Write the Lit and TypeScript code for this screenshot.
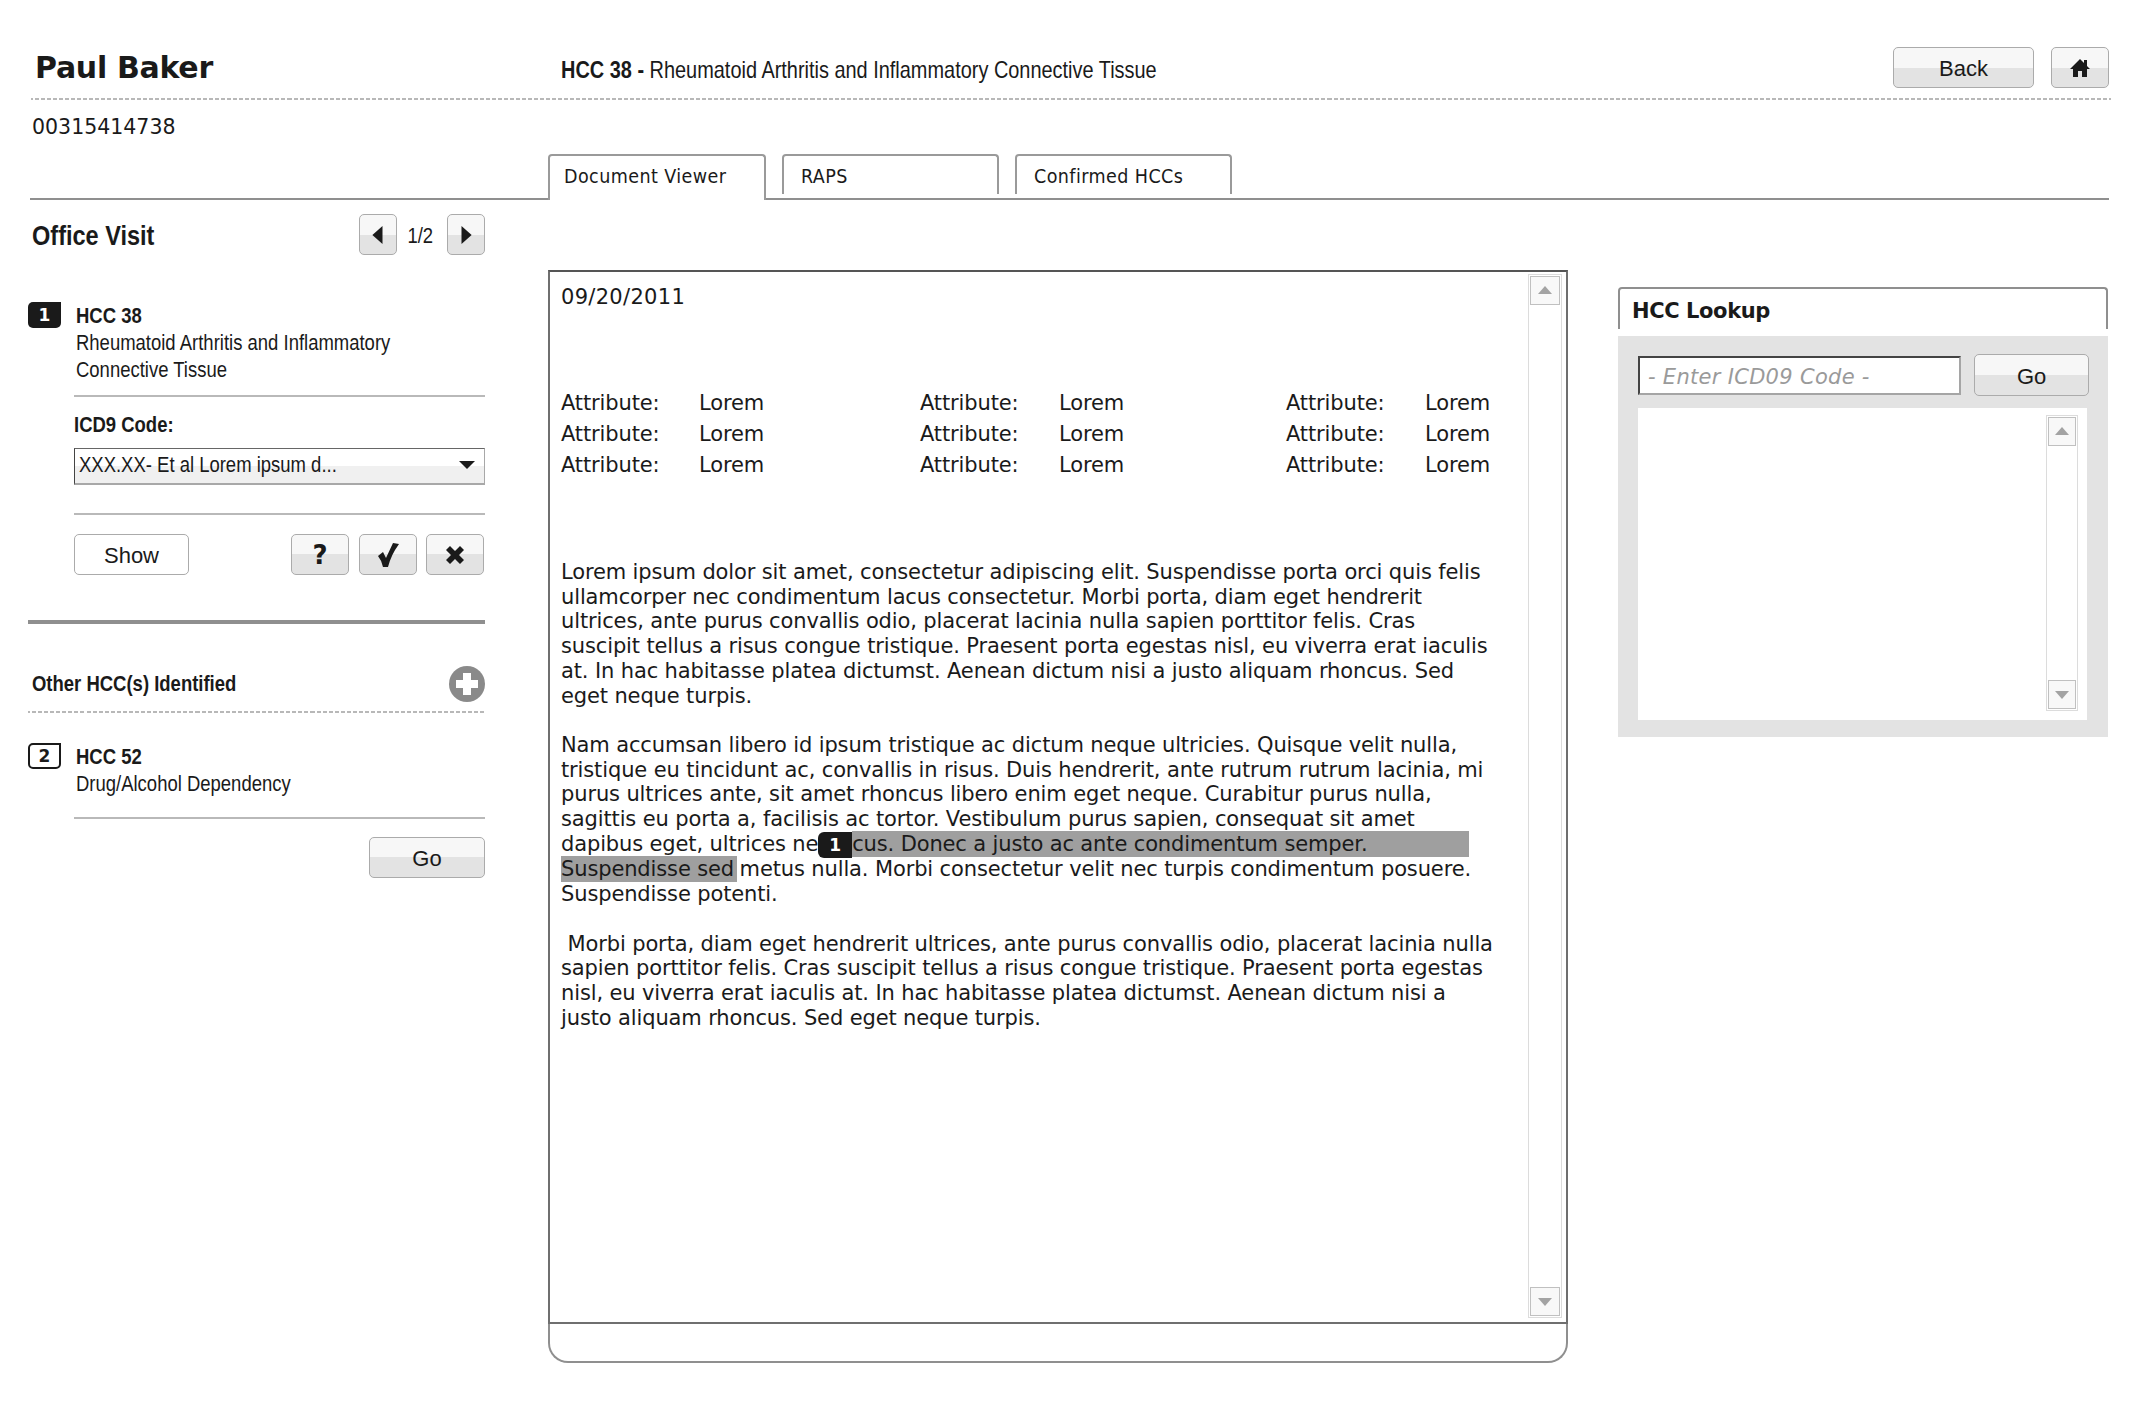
import { LitElement, html, css } from "lit";
import { customElement } from "lit/decorators.js";

const tri = (d: string, fill = "#1a1a1a", size = 16) => html`<svg class="tri" viewBox="0 0 16 16" width="${size}" height="${size}"><path d="${d}" fill="${fill}"></path></svg>`;
const UP = "M8 3 L15 11 L1 11 Z";
const DOWN = "M1 4 L15 4 L8 12 Z";
const LEFT = "M12 0 L12 16 L3 8 Z";
const RIGHT = "M4 0 L4 16 L13 8 Z";

const scrollbar = html`<div class="sb">
  <div class="sb-btn">${tri(UP, "#a3a3a3")}</div>
  <div class="sb-btn">${tri(DOWN, "#a3a3a3")}</div>
</div>`;

const attrRow = html`
  <span>Attribute:</span><span>Lorem</span>
  <span>Attribute:</span><span>Lorem</span>
  <span>Attribute:</span><span>Lorem</span>`;

@customElement("app-root")
export class AppRoot extends LitElement {
  static styles = css`
    :host { display: block; width: 2134px; height: 1418px; background: #fff; color: #1a1a1a; font-family: "DejaVu Sans", sans-serif; overflow: hidden; }
    * { box-sizing: border-box; }
    .sq { display: inline-block; transform: scaleX(0.84); transform-origin: 0 50%; white-space: nowrap; }
    .btn { display: flex; align-items: center; justify-content: center; border: 1px solid #ababab; border-radius: 5px; background: linear-gradient(#f7f7f7 0 50%, #e3e3e3 50% 100%); color: #1a1a1a; font-family: "Liberation Sans", Arial, sans-serif; font-size: 22px; padding: 3px 0 0; }
    .btn.plain { background: #fff; padding-top: 2px; }

    .head { height: 100px; margin: 0 23px 0 31px; border-bottom: 2px dashed #c4c4c4; display: flex; align-items: flex-end; border-image: repeating-linear-gradient(90deg, #b8b8b8 0 4px, transparent 4px 6px) 2; }
    .name { width: 530px; padding: 0 0 12px 4px; font-size: 30px; font-weight: 700; line-height: 36px; letter-spacing: -0.3px; }
    .title { flex: 1; padding-bottom: 13px; font-size: 24px; line-height: 30px; white-space: nowrap; font-family: "Liberation Sans", Arial, sans-serif; }
    .title .sq { transform: scaleX(0.83); }
    .title b { font-weight: 700; }
    .head .btn { height: 41px; margin-bottom: 10px; }
    .back { width: 141px; margin-right: 17px; }
    .home { width: 58px; margin-right: 2px; padding: 0; }

    .idrow { height: 54px; margin-left: 32px; font-size: 20.5px; line-height: 54px; }
    .tabs { height: 46px; margin: 0 25px 0 30px; border-bottom: 2px solid #8f8f8f; padding-left: 518px; display: flex; gap: 16px; align-items: flex-start; }
    .tab { flex: none; width: 217px; height: 40px; border: 2px solid #9a9a9a; border-bottom: 0; border-radius: 4px 4px 0 0; font-size: 19.5px; letter-spacing: 0.42px; line-height: 41px; padding-left: 17px; white-space: nowrap; font-stretch: condensed; }
    .tab.on { width: 218px; height: 46px; background: #fff; padding-left: 14px; }

    .main { display: flex; align-items: flex-start; margin-left: 28px; }
    .side { width: 457px; margin-right: 63px; font-family: "Liberation Sans", Arial, sans-serif; }
    .vhead { display: flex; align-items: center; height: 41px; margin-top: 14px; padding-left: 4px; }
    .vhead h2 { flex: 1; margin: 0; font-size: 28px; font-weight: 700; padding-top: 2px; }
    .nav { width: 38px; height: 41px; padding: 0; }
    .tri { display: block; }
    .page { width: 50px; text-align: center; font-size: 22px; padding: 3px 4px 0 0; }
    .page .sq { transform-origin: 50% 50%; }

    .item { display: flex; margin-top: 47px; }
    .badge { flex: none; width: 33px; height: 26px; border-radius: 5px 0 5px 5px; background: #1a1a1a; color: #fff; font-family: "DejaVu Sans", sans-serif; font-weight: 700; font-size: 17px; line-height: 26px; text-align: center; }
    .badge.open { background: #fff; color: #1a1a1a; border: 2px solid #1a1a1a; line-height: 22px; }
    .itxt { margin-left: 15px; font-size: 22px; line-height: 27px; white-space: nowrap; }
    .itxt b { font-weight: 700; }
    .in { margin-left: 46px; }
    hr { border: 0; height: 2px; background: #b9b9b9; margin: 0; }
    .label { font-size: 22px; font-weight: 700; line-height: 26px; margin-top: 15px; }
    .select { display: flex; align-items: center; justify-content: space-between; height: 37px; margin-top: 10px; padding: 0 9px 2px 4px; border: 1px solid #a8a8a8; border-bottom-width: 2px; border-top-color: #666; border-left-color: #444; background: linear-gradient(#fff 0 50%, #f0f0f0 50% 100%); font-size: 22px; white-space: nowrap; }
    .select .sq { width: 300px; }
    .actions { display: flex; margin-top: 19px; height: 41px; }
    .show { width: 115px; margin-right: 102px; }
    .act { width: 58px; margin-right: 9.5px; padding: 0; }
    .act:last-child { margin-right: 0; }
    .help { font-family: "DejaVu Sans", sans-serif; font-weight: 700; font-size: 26px; }
    .thick { height: 4px; background: #8f8f8f; margin-top: 45px; }
    .other { display: flex; align-items: flex-end; justify-content: space-between; height: 89px; padding: 0 0 9px 4px; border-bottom: 2px dashed #c4c4c4; border-image: repeating-linear-gradient(90deg, #b8b8b8 0 4px, transparent 4px 6px) 2; }
    .other .sq { font-size: 22px; font-weight: 700; line-height: 36px; }
    .plus { display: block; }
    .item.two { margin-top: 30px; }
    .go-row { display: flex; justify-content: flex-end; margin-top: 18px; }
    .go { width: 116px; height: 41px; }

    .doc { width: 1020px; margin-top: 70px; height: 1093px; border: 2px solid #8f8f8f; border-top: 0; border-radius: 0 0 20px 20px; display: flex; flex-direction: column; }
    .docbody { height: 1054px; flex: none; border-bottom: 2px solid #6f6f6f; border-top: 2px solid #555; margin: 0 -2px; border-left: 2px solid #6f6f6f; border-right: 2px solid #6f6f6f; display: flex; }
    .doctext { flex: 1; padding: 10px 0 0 11px; font-size: 21px; line-height: 24.7px; white-space: nowrap; letter-spacing: -0.13px; }
    .date { height: 106px; line-height: 30px; letter-spacing: 0.3px; }
    .attrs { display: grid; grid-template-columns: 138px 221px 139px 227px 139px auto; grid-auto-rows: 31px; line-height: 31px; margin-bottom: 79px; }
    .para { margin-bottom: 24.7px; }
    .hl { background: #9f9f9f; padding: 1px 0; }
    .hl.first { padding-right: 102px; }
    .hl.second { padding-right: 3px; margin-right: -4px; }
    .mini { background: #1a1a1a; color: #fff; border-radius: 6px 0 0 6px; font-weight: 700; font-size: 17px; letter-spacing: 0; padding: 3px 11px; }

    .sb { flex: none; width: 34px; margin: 2px 4px 4px 0; border: 1px solid #dcdcdc; display: flex; flex-direction: column; justify-content: space-between; }
    .sb-btn { height: 29px; margin: 1px; border: 1px solid #c0c0c0; background: #f8f8f8; display: flex; align-items: center; justify-content: center; }

    .look { width: 490px; margin-left: 50px; margin-top: 87px; }
    .ltab { height: 42px; border: 2px solid #8f8f8f; border-bottom: 0; border-radius: 4px 4px 0 0; font-size: 21px; font-weight: 700; line-height: 44px; padding-left: 12px; letter-spacing: -0.4px; }
    .lpanel { margin-top: 7px; height: 401px; background: #e3e3e3; padding: 18px 19px 17px 20px; }
    .lrow { display: flex; gap: 13px; align-items: center; height: 42px; }
    .linput { width: 324px; height: 39px; border: 2px solid #a5a5a5; border-top-color: #444; border-left-color: #444; background: #fff; font-style: italic; color: #9a9a9a; font-size: 21px; letter-spacing: 0.3px; line-height: 38px; padding-left: 8px; white-space: nowrap; }
    .lgo { width: 115px; height: 42px; }
    .lbox { margin-top: 12px; width: 449px; height: 312px; background: #fff; display: flex; justify-content: flex-end; }
    .lbox .sb { margin: 7px 9px 9px 0; width: 32px; }
  `;

  render() {
    return html`
      <div class="head">
        <div class="name">Paul Baker</div>
        <div class="title"><span class="sq"><b>HCC 38 -</b> Rheumatoid Arthritis and Inflammatory Connective Tissue</span></div>
        <button class="btn back">Back</button>
        <button class="btn home" aria-label="Home"><svg width="22" height="22" viewBox="0 0 22 22"><path d="M11 2 L15 6 V3 H18 V9 L21 12 H18 V20 H13 V14 H9 V20 H4 V12 H1 Z" fill="#1a1a1a"></path></svg></button>
      </div>
      <div class="idrow">00315414738</div>
      <div class="tabs">
        <div class="tab on">Document Viewer</div>
        <div class="tab">RAPS</div>
        <div class="tab">Confirmed HCCs</div>
      </div>
      <div class="main">
        <div class="side">
          <div class="vhead">
            <h2><span class="sq">Office Visit</span></h2>
            <button class="btn nav" aria-label="Previous">${tri(LEFT, "#1a1a1a", 18)}</button>
            <div class="page"><span class="sq">1/2</span></div>
            <button class="btn nav" aria-label="Next">${tri(RIGHT, "#1a1a1a", 18)}</button>
          </div>
          <div class="item">
            <div class="badge">1</div>
            <div class="itxt"><span class="sq"><b>HCC 38</b><br />Rheumatoid Arthritis and Inflammatory<br />Connective Tissue</span></div>
          </div>
          <div class="in">
            <hr style="margin-top:12px" />
            <div class="label"><span class="sq">ICD9 Code:</span></div>
            <div class="select"><span class="sq">XXX.XX- Et al Lorem ipsum d...</span><svg width="16" height="10" viewBox="0 0 16 10"><path d="M0 1 L16 1 L8 9 Z" fill="#1a1a1a"></path></svg></div>
            <hr style="margin-top:28px" />
            <div class="actions">
              <button class="btn plain show">Show</button>
              <button class="btn act help" aria-label="Help">?</button>
              <button class="btn act" aria-label="Confirm"><svg width="24" height="26" viewBox="0 0 24 26"><path d="M2 14 L7 10 L10 16 L17 1 L23 2 Q15 13 12 25 L7 25 Q6 19 2 14 Z" fill="#1a1a1a"></path></svg></button>
              <button class="btn act" aria-label="Reject"><svg width="20" height="20" viewBox="0 0 20 20"><path d="M1 5 L5 1 L10 6 L15 1 L19 5 L14 10 L19 15 L15 19 L10 14 L5 19 L1 15 L6 10 Z" fill="#1a1a1a"></path></svg></button>
            </div>
          </div>
          <div class="thick"></div>
          <div class="other">
            <span class="sq">Other HCC(s) Identified</span>
            <svg class="plus" width="36" height="36" viewBox="0 0 36 36"><circle cx="18" cy="18" r="18" fill="#8a8a8a"></circle><path d="M14 7 H22 V14 H29 V22 H22 V29 H14 V22 H7 V14 H14 Z" fill="#fff"></path></svg>
          </div>
          <div class="item two">
            <div class="badge open">2</div>
            <div class="itxt"><span class="sq"><b>HCC 52</b><br />Drug/Alcohol Dependency</span></div>
          </div>
          <div class="in">
            <hr style="margin-top:20px" />
            <div class="go-row"><button class="btn go">Go</button></div>
          </div>
        </div>

        <div class="doc">
          <div class="docbody">
            <div class="doctext">
              <div class="date">09/20/2011</div>
              <div class="attrs">${attrRow}${attrRow}${attrRow}</div>
              <div class="para">Lorem ipsum dolor sit amet, consectetur adipiscing elit. Suspendisse porta orci quis felis<br />
              ullamcorper nec condimentum lacus consectetur. Morbi porta, diam eget hendrerit<br />
              ultrices, ante purus convallis odio, placerat lacinia nulla sapien porttitor felis. Cras<br />
              suscipit tellus a risus congue tristique. Praesent porta egestas nisl, eu viverra erat iaculis<br />
              at. In hac habitasse platea dictumst. Aenean dictum nisi a justo aliquam rhoncus. Sed<br />
              eget neque turpis.</div>
              <div class="para">Nam accumsan libero id ipsum tristique ac dictum neque ultricies. Quisque velit nulla,<br />
              tristique eu tincidunt ac, convallis in risus. Duis hendrerit, ante rutrum rutrum lacinia, mi<br />
              purus ultrices ante, sit amet rhoncus libero enim eget neque. Curabitur purus nulla,<br />
              sagittis eu porta a, facilisis ac tortor. Vestibulum purus sapien, consequat sit amet<br />
              dapibus eget, ultrices ne<span class="mini">1</span><span class="hl first">cus. Donec a justo ac ante condimentum semper.</span><br />
              <span class="hl second">Suspendisse sed</span> metus nulla. Morbi consectetur velit nec turpis condimentum posuere.<br />
              Suspendisse potenti.</div>
              <div class="para">&nbsp;Morbi porta, diam eget hendrerit ultrices, ante purus convallis odio, placerat lacinia nulla<br />
              sapien porttitor felis. Cras suscipit tellus a risus congue tristique. Praesent porta egestas<br />
              nisl, eu viverra erat iaculis at. In hac habitasse platea dictumst. Aenean dictum nisi a<br />
              justo aliquam rhoncus. Sed eget neque turpis.</div>
            </div>
            ${scrollbar}
          </div>
        </div>

        <div class="look">
          <div class="ltab">HCC Lookup</div>
          <div class="lpanel">
            <div class="lrow">
              <div class="linput">- Enter ICD09 Code -</div>
              <button class="btn lgo">Go</button>
            </div>
            <div class="lbox">${scrollbar}</div>
          </div>
        </div>
      </div>
    `;
  }
}
